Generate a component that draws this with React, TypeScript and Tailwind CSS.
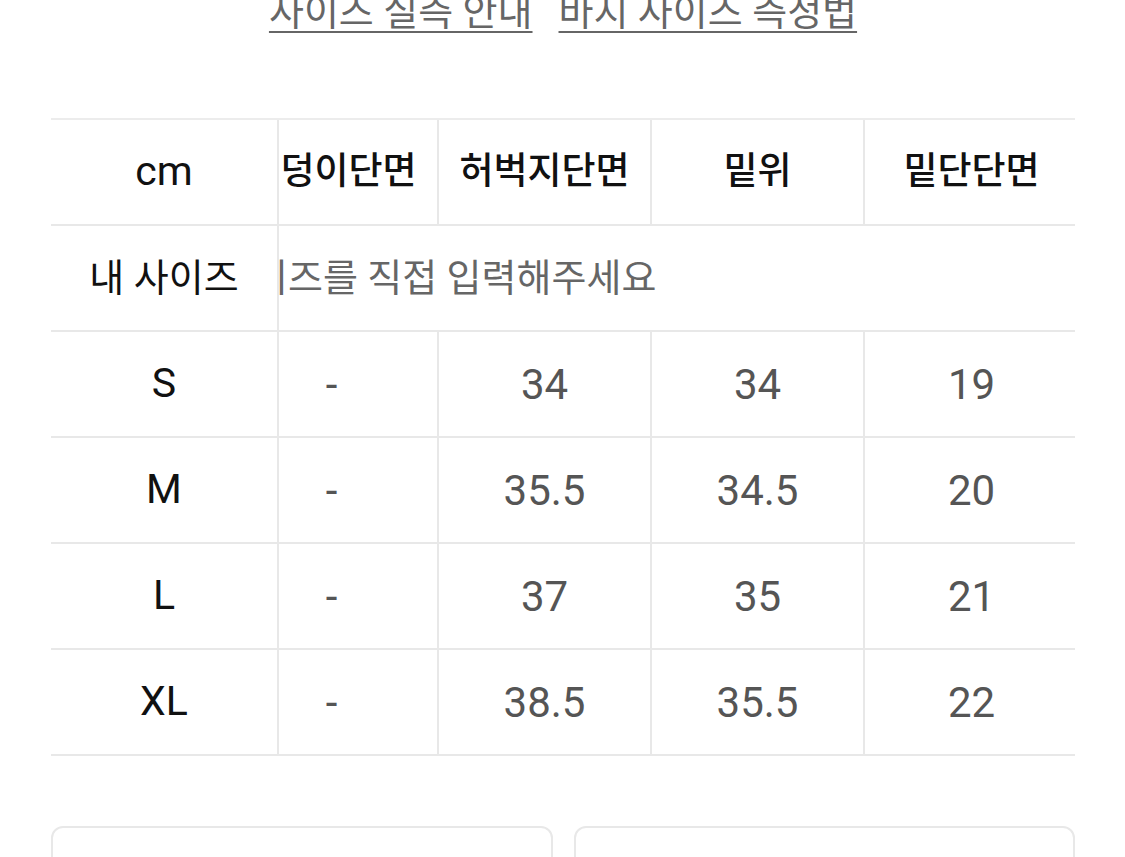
const headers = ['엉덩이단면', '허벅지단면', '밑위', '밑단단면'];

const sizes = [
  { size: 'S', values: ['-', '34', '34', '19'] },
  { size: 'M', values: ['-', '35.5', '34.5', '20'] },
  { size: 'L', values: ['-', '37', '35', '21'] },
  { size: 'XL', values: ['-', '38.5', '35.5', '22'] },
];

function Cell({ children, last, className = '' }: { children?: React.ReactNode; last?: boolean; className?: string }) {
  return (
    <div
      className={`w-[213px] shrink-0 h-full flex items-center justify-center whitespace-nowrap ${last ? '' : 'border-r-2 border-[#e8e8e8]'} ${className}`}
    >
      {children}
    </div>
  );
}

export default function App() {
  return (
    <div className="h-[857px] overflow-hidden bg-white pl-[51px] pr-[50px] font-['Roboto','Noto_Sans_CJK_KR',sans-serif]">
      {/* Links */}
      <div className="-mt-[9px] flex justify-center gap-[26px] text-[38px] leading-[42px] text-[#666]">
        <a className="underline decoration-2 underline-offset-[6px] decoration-[#666]">사이즈 실측 안내</a>
        <a className="underline decoration-2 underline-offset-[6px] decoration-[#666]">바지 사이즈 측정법</a>
      </div>

      {/* Size table */}
      <div className="mt-[85px] flex border-t-2 border-[#ececec]">
        {/* sticky column */}
        <div className="w-[228px] shrink-0 border-r-2 border-[#e8e8e8]">
          <div className="h-[106px] border-b-2 border-[#e8e8e8] flex items-center justify-center text-[41px] text-[#111]">
            cm
          </div>
          <div className="h-[106px] border-b-2 border-[#e8e8e8] flex items-center justify-center text-[38px] text-[#111]">
            내 사이즈
          </div>
          {sizes.map(s => (
            <div key={s.size} className="h-[106px] border-b-2 border-[#e8e8e8] flex items-center justify-center text-[41px] text-[#111]">
              {s.size}
            </div>
          ))}
        </div>

        {/* scrolled columns */}
        <div className="flex-1 overflow-hidden">
          <div className="-ml-[53px] w-[852px]">
            <div className="h-[106px] flex border-b-2 border-[#e8e8e8] text-[37px] font-medium text-[#111]">
              {headers.map((h, i) => (
                <Cell key={h} last={i === headers.length - 1}>{h}</Cell>
              ))}
            </div>
            <div className="h-[106px] flex items-center border-b-2 border-[#e8e8e8] text-[38px] text-[#666]">
              <span className="-ml-[8px] whitespace-nowrap">사이즈를 직접 입력해주세요</span>
            </div>
            {sizes.map(s => (
              <div key={s.size} className="h-[106px] flex border-b-2 border-[#e8e8e8] text-[42px] text-[#555]">
                {s.values.map((v, i) => (
                  <Cell key={i} last={i === s.values.length - 1}>{v}</Cell>
                ))}
              </div>
            ))}
          </div>
        </div>
      </div>

      {/* Bottom buttons */}
      <div className="mt-[70px] grid grid-cols-2 gap-[21px]">
        <div className="h-[100px] rounded-[12px] border-2 border-[#e8e8e8]" />
        <div className="h-[100px] rounded-[12px] border-2 border-[#e8e8e8]" />
      </div>
    </div>
  );
}
